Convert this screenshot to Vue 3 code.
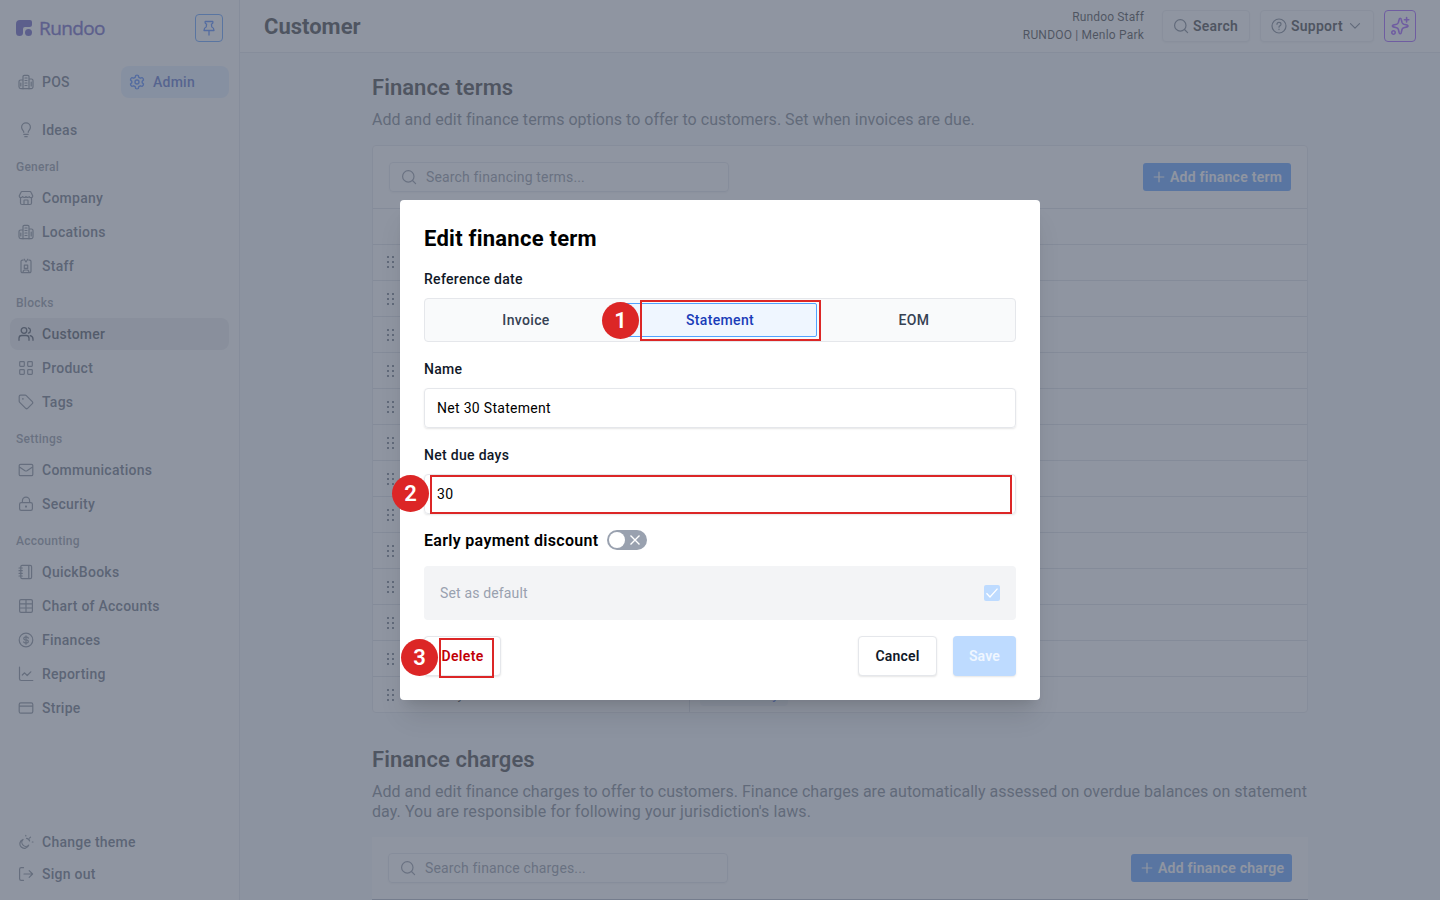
<script setup>
const icons = {
  pos: 'M5 15V2.5A1.2 1.2 0 0 1 6.2 1.3H9.8A1.2 1.2 0 0 1 11 2.5V15M5 6H2.6A1.6 1.6 0 0 0 1 7.6V12.8A1.8 1.8 0 0 0 2.8 14.6H13.2A1.8 1.8 0 0 0 15 12.8V6.6A1.6 1.6 0 0 0 13.4 5H11M7 4H9M7 6.5H9M7 9H9M7 11.5H9M2.8 9V12M13.2 8V12',
  gear: 'M6.7 1.5Q8 .8 9.3 1.5L9.8 3.4L11.3 4.2L13.1 3.7Q14.5 4.3 14.5 6L13.2 7.3V8.7L14.5 10Q14.5 11.7 13.1 12.3L11.3 11.8L9.8 12.6L9.3 14.5Q8 15.2 6.7 14.5L6.2 12.6L4.7 11.8L2.9 12.3Q1.5 11.7 1.5 10L2.8 8.7V7.3L1.5 6Q1.5 4.3 2.9 3.7L4.7 4.2L6.2 3.4ZM10 8A2 2 0 1 1 6 8A2 2 0 1 1 10 8',
  idea: 'M5.8 10.3C5.8 8.6 3.6 8 3.6 5.3A4.4 4.4 0 0 1 12.4 5.3C12.4 8 10.2 8.6 10.2 10.3M5.8 12.3H10.2M6.8 14.7H9.2',
  shop: 'M1.2 6L3 2.2Q3.3 1.5 4 1.5H12Q12.7 1.5 13 2.2L14.8 6Q14.8 7.7 13 7.7Q11.6 7.7 11.3 6.6Q10.4 7.7 9 7.4Q8.4 7.2 8 6.6Q7.4 7.5 6.2 7.5Q5.2 7.4 4.7 6.6Q4.2 7.7 3 7.7Q1.2 7.6 1.2 6M2.5 7.7V13A1.5 1.5 0 0 0 4 14.5H12A1.5 1.5 0 0 0 13.5 13V7.7M6 14.5V10.6Q6 10 6.6 10H9.4Q10 10 10 10.6V14.5',
  staff: 'M5 2.2H4.3A1.3 1.3 0 0 0 3 3.5V13.3A1.3 1.3 0 0 0 4.3 14.6H11.7A1.3 1.3 0 0 0 13 13.3V3.5A1.3 1.3 0 0 0 11.7 2.2H11M6.2 1.2L8 4L9.8 1.2M6.3 7.2H9.7V10.4H6.3ZM5.2 14.5V13.2L6.3 12H9.7L10.8 13.2V14.5',
  users: 'M8.8 4.5A2.8 2.8 0 1 1 3.2 4.5A2.8 2.8 0 1 1 8.8 4.5M1 14.3V12.3A2.8 2.8 0 0 1 3.8 9.5H8.2A2.8 2.8 0 0 1 11 12.3V14.3M10.4 1.8A2.8 2.8 0 0 1 10.4 7.2M12.2 9.7Q15 10.4 15 13V14.3',
  grid: 'M1.7 2.4Q1.7 1.7 2.4 1.7H5.6Q6.3 1.7 6.3 2.4V5.6Q6.3 6.3 5.6 6.3H2.4Q1.7 6.3 1.7 5.6ZM9.7 2.4Q9.7 1.7 10.4 1.7H13.6Q14.3 1.7 14.3 2.4V5.6Q14.3 6.3 13.6 6.3H10.4Q9.7 6.3 9.7 5.6ZM1.7 10.4Q1.7 9.7 2.4 9.7H5.6Q6.3 9.7 6.3 10.4V13.6Q6.3 14.3 5.6 14.3H2.4Q1.7 14.3 1.7 13.6ZM9.7 10.4Q9.7 9.7 10.4 9.7H13.6Q14.3 9.7 14.3 10.4V13.6Q14.3 14.3 13.6 14.3H10.4Q9.7 14.3 9.7 13.6Z',
  tag: 'M1.2 2.5V7.2Q1.2 7.8 1.7 8.3L7.7 14.3Q8.7 15.2 9.6 14.3L14.3 9.6Q15.2 8.7 14.3 7.7L8.3 1.7Q7.8 1.2 7.2 1.2H2.5Q1.2 1.2 1.2 2.5M4.7 4.7H5.1V5.1H4.7Z',
  mail: 'M2.5 2.3H13.5Q14.8 2.3 14.8 3.6V12.4Q14.8 13.7 13.5 13.7H2.5Q1.2 13.7 1.2 12.4V3.6Q1.2 2.3 2.5 2.3M1.4 5L7 8.7Q8 9.3 9 8.7L14.6 5',
  lock: 'M3.2 6.7H12.8Q14.4 6.7 14.4 8.3V12.8Q14.4 14.4 12.8 14.4H3.2Q1.6 14.4 1.6 12.8V8.3Q1.6 6.7 3.2 6.7M4.4 6.7V4.7A3.6 3.6 0 0 1 11.6 4.7V6.7M7.6 10.2H8.4V11H7.6Z',
  book: 'M4 1.4H12.2Q13.6 1.4 13.6 2.8V13.2Q13.6 14.6 12.2 14.6H4Q2.8 14.6 2.8 13.2V2.8Q2.8 1.4 4 1.4M10.8 1.4V14.6M1 4H4.3M1 6.7H4.3M1 9.3H4.3M1 12H4.3',
  table: 'M3 1.6H13Q14.4 1.6 14.4 3V13Q14.4 14.4 13 14.4H3Q1.6 14.4 1.6 13V3Q1.6 1.6 3 1.6M1.6 5.8H14.4M1.6 10H14.4M8 1.6V14.4',
  dollar: 'M14.8 8A6.8 6.8 0 1 1 1.2 8A6.8 6.8 0 1 1 14.8 8M10.3 6.2Q10.3 5.2 9.2 5.2H6.9Q5.8 5.2 5.8 6.5Q5.8 7.5 6.9 7.8L9.2 8.2Q10.3 8.5 10.3 9.5Q10.3 10.8 9.2 10.8H6.9Q5.7 10.8 5.7 9.8M8 3.8V12.2',
  chart: 'M1.5 1.2V12.8Q1.5 14.5 3.2 14.5H14.8M4.3 9L6.6 6.8L9.2 9.5L12.8 5.8',
  card: 'M2.8 2.8H13.2Q14.8 2.8 14.8 4.4V11.6Q14.8 13.2 13.2 13.2H2.8Q1.2 13.2 1.2 11.6V4.4Q1.2 2.8 2.8 2.8M1.2 6.2H14.8',
  theme: 'M5 5.5A4.5 4.5 0 1 0 10.7 11.1A3.7 3.7 0 0 1 5 5.5M7.8 1.3V2M12.5 3.2L11.5 4.2M14.3 8H15M8.5 4.3Q11 4.5 11.6 7',
  out: 'M5.5 1.7H3.2Q1.6 1.7 1.6 3.3V12.7Q1.6 14.3 3.2 14.3H5.5M6 8H14.6M11.2 4.6L14.6 8L11.2 11.4',
  search: 'M13 7.4A5.7 5.7 0 1 1 1.6 7.4A5.7 5.7 0 1 1 13 7.4M11.5 11.5L14.6 14.6',
}
const groups = [
  { title: 'General', items: [['shop', 'Company'], ['pos', 'Locations'], ['staff', 'Staff']] },
  { title: 'Blocks', items: [['users', 'Customer'], ['grid', 'Product'], ['tag', 'Tags']] },
  { title: 'Settings', items: [['mail', 'Communications'], ['lock', 'Security']] },
  { title: 'Accounting', items: [['book', 'QuickBooks'], ['table', 'Chart of Accounts'], ['dollar', 'Finances'], ['chart', 'Reporting'], ['card', 'Stripe']] },
]
const footer = [['theme', 'Change theme'], ['out', 'Sign out']]
</script>

<template>
  <div class="app">
    <aside class="sidebar">
      <div class="brand">
        <svg class="mark" viewBox="0 0 16 16"><path d="M4 0H14Q16 0 16 2V4.5Q16 7 13.5 7H9Q7 7 7 9V13Q7 16 3.5 16Q0 16 0 12.5V4Q0 0 4 0Z" /><circle cx="12.5" cy="12.5" r="3.5" /></svg>
        <span class="wordmark">Rundoo</span>
        <button class="pin">
          <svg class="icon" viewBox="0 0 16 16"><path d="M4.2 1.5H11.8Q12.3 3.8 10.4 4.2L10.8 7Q13 7.8 13 10.5H3Q3 7.8 5.2 7L5.6 4.2Q3.7 3.8 4.2 1.5M8 10.5V15" /></svg>
        </button>
      </div>
      <div class="modes">
        <div class="nav"><svg class="icon" viewBox="0 0 16 16"><path :d="icons.pos" /></svg>POS</div>
        <div class="nav admin"><svg class="icon" viewBox="0 0 16 16"><path :d="icons.gear" /></svg>Admin</div>
      </div>
      <div class="nav"><svg class="icon" viewBox="0 0 16 16"><path :d="icons.idea" /></svg>Ideas</div>
      <template v-for="g in groups" :key="g.title">
        <div class="group">{{ g.title }}</div>
        <div v-for="[icon, label] in g.items" :key="label" class="nav item" :class="{ current: label === 'Customer' }">
          <svg class="icon" viewBox="0 0 16 16"><path :d="icons[icon]" /></svg>{{ label }}
        </div>
      </template>
      <div class="foot">
        <div v-for="[icon, label] in footer" :key="label" class="nav">
          <svg class="icon" viewBox="0 0 16 16"><path :d="icons[icon]" /></svg>{{ label }}
        </div>
      </div>
    </aside>

    <div class="page">
      <header class="top">
        <h1>Customer</h1>
        <div class="who"><span>Rundoo Staff</span><span class="store">RUNDOO | Menlo Park</span></div>
        <button class="tool search"><svg class="icon" viewBox="0 0 16 16"><path :d="icons.search" /></svg>Search</button>
        <button class="tool support">
          <svg class="icon" viewBox="0 0 16 16"><path d="M15 8A7 7 0 1 1 1 8A7 7 0 1 1 15 8M6 6.3Q6 4.4 8 4.4Q10 4.4 10 6.2Q10 7.3 8.8 7.9Q8 8.3 8 9.2M8 11.2V11.6" /></svg>Support
          <svg class="icon chev" viewBox="0 0 16 16"><path d="M3.5 5.7L8 10.2L12.5 5.7" /></svg>
        </button>
        <button class="sparkle">
          <svg viewBox="0 0 20 20"><path d="M10.2 2.3Q11 2.3 11.2 3.2L12 6.4Q12.4 7.8 13.8 8.2L17 9Q19 10 17 10.9L13.8 11.7Q12.4 12.1 12 13.5L11.2 16.8Q10.2 18.8 9.2 16.8L8.4 13.5Q8 12.1 6.6 11.7L3.4 10.9Q1.4 10 3.4 9L6.6 8.2Q8 7.8 8.4 6.4L9.2 3.2Q9.4 2.3 10.2 2.3M16.6 1.5V5.9M14.4 3.7H18.8M5.2 16.5A1.7 1.7 0 1 1 1.8 16.5A1.7 1.7 0 1 1 5.2 16.5" /></svg>
        </button>
      </header>

      <main class="content">
        <h2>Finance terms</h2>
        <p class="terms-note">Add and edit finance terms options to offer to customers. Set when invoices are due.</p>
        <section class="card terms">
          <div class="bar">
            <div class="field"><svg class="icon" viewBox="0 0 16 16"><path :d="icons.search" /></svg>Search financing terms...</div>
            <button class="add"><svg viewBox="0 0 16 16"><path d="M8 2V14M2 8H14" /></svg>Add finance term</button>
          </div>
          <div class="row"></div>
          <div v-for="n in 13" :key="n" class="row">
            <svg class="grip" viewBox="0 0 8 14"><path d="M0 1h2v2h-2zM5 1h2v2h-2zM0 6h2v2h-2zM5 6h2v2h-2zM0 11h2v2h-2zM5 11h2v2h-2z" /></svg>
            <template v-if="n === 13">
              <span class="name">Monthly</span>
              <span class="cell"><span class="badge">Invoice day</span></span>
            </template>
          </div>
        </section>
        <h2 class="second">Finance charges</h2>
        <p class="charges-note">Add and edit finance charges to offer to customers. Finance charges are automatically assessed on overdue balances on statement<br><span class="second-line">day. You are responsible for following your jurisdiction's laws.</span></p>
        <section class="card charges">
          <div class="bar">
            <div class="field"><svg class="icon" viewBox="0 0 16 16"><path :d="icons.search" /></svg>Search finance charges...</div>
            <button class="add"><svg viewBox="0 0 16 16"><path d="M8 2V14M2 8H14" /></svg>Add finance charge</button>
          </div>
        </section>
      </main>
    </div>

    <div class="overlay">
      <div class="modal">
        <h3>Edit finance term</h3>
        <label class="l-ref">Reference date</label>
        <div class="segments"><span>Invoice</span><span class="on">Statement</span><span>EOM</span></div>
        <label>Name</label>
        <div class="input">Net 30 Statement</div>
        <label>Net due days</label>
        <div class="input">30</div>
        <div class="discount">
          <span>Early payment discount</span>
          <div class="toggle"><i></i><svg viewBox="0 0 12 12"><path d="M1.5 1.5L10.5 10.5M10.5 1.5L1.5 10.5" /></svg></div>
        </div>
        <div class="default">
          <span>Set as default</span>
          <svg class="check" viewBox="0 0 16 16"><rect width="16" height="16" rx="2" /><path d="M2.5 8.3L6 12L13.5 3.6" /></svg>
        </div>
        <div class="actions">
          <button class="btn delete">Delete</button>
          <button class="btn cancel">Cancel</button>
          <button class="btn save">Save</button>
        </div>
      </div>
    </div>

    <div class="mark-box b1"></div><div class="mark-dot d1">1</div>
    <div class="mark-box b2"></div><div class="mark-dot d2">2</div>
    <div class="mark-box b3"></div><div class="mark-dot d3">3</div>
  </div>
</template>

<style>
body { margin: 0; overflow: hidden; }
</style>

<style scoped>
* { box-sizing: border-box; }
.app { position: relative; display: flex; width: 1440px; height: 900px; overflow: hidden; font-family: Roboto, "Noto Sans", sans-serif; color: #000; background: #f4f6f9; }
h1, h2, h3, p { margin: 0; }
button { font: inherit; padding: 0; letter-spacing: inherit; }
.icon { width: 16px; height: 16px; flex: none; fill: none; stroke: currentColor; stroke-width: 1.2; stroke-linecap: round; stroke-linejoin: round; }

.sidebar { width: 240px; flex: none; display: flex; flex-direction: column; padding: 14px 10px 10px; background: #fff; border-right: 1px solid #dcdfe5; }
.brand { display: flex; align-items: center; height: 28px; padding: 0 6px; color: #432dd7; }
.mark { width: 16px; height: 16px; fill: #372aac; }
.wordmark { margin-left: 7px; font: 500 19px/28px "Open Sans", sans-serif; letter-spacing: -.6px; color: #372aac; -webkit-text-stroke: .4px; }
.pin { width: 28px; height: 28px; margin-left: auto; display: grid; place-items: center; border: 1px solid #2b7fff; border-radius: 4px; background: #fff; color: #155dfc; }
.pin .icon { stroke-width: 1.3; }
.modes { display: grid; grid-template-columns: 108px 108px; gap: 3px; margin: 24px 0 16px; }
.nav { display: flex; flex: none; align-items: center; height: 32px; gap: 8px; padding: 0 8px; border-radius: 8px; font-size: 14px; font-weight: 500; letter-spacing: .25px; color: #364153; }
.nav .icon { color: #4a5565; opacity: .9; }
.admin { background: #dbeafe; color: #193cb8; }
.admin .icon { color: #155dfc; opacity: 1; stroke-width: 1.4; }
.item { margin-bottom: 2px; }
.current { background: #e5e7eb; color: #101828; }
.current .icon { color: #101828; opacity: 1; stroke-width: 1.3; }
.group { flex: none; height: 32px; margin-top: 2px; padding-left: 6px; font-size: 12px; font-weight: 500; line-height: 34px; letter-spacing: .25px; color: #6a7282; }
.modes + .nav + .group { margin-top: 4px; }
.foot { margin-top: auto; }

.page { flex: 1; min-width: 0; }
.top { display: flex; align-items: center; height: 53px; padding: 0 24px 1px; background: #fff; border-bottom: 1px solid #dcdfe5; }
h1 { padding-top: 2px; font-size: 22px; font-weight: 700; line-height: 30px; letter-spacing: 0; }
.who { margin-left: auto; margin-right: 18px; display: flex; flex-direction: column; align-items: flex-end; font-size: 12px; line-height: 18px; letter-spacing: .15px; }
.store { letter-spacing: .2px; }
.tool { height: 32px; display: flex; align-items: center; gap: 4px; padding: 0 10px; border: 1px solid #e5e7eb; border-radius: 4px; background: #fff; font-size: 14px; font-weight: 600; letter-spacing: .25px; box-shadow: 0 1px 2px #0001; }
.tool .icon { color: #4a5565; }
.search { width: 88px; margin-right: 10px; }
.support { width: 114px; margin-right: 10px; }
.sparkle { width: 32px; height: 32px; display: grid; place-items: center; border: 1px solid #7f22fe; border-radius: 4px; background: #fff; }
.sparkle svg { width: 20px; fill: none; stroke: #7f22fe; stroke-width: 1.6; stroke-linecap: round; }
.content { width: 936px; margin: 0 auto; padding-top: 20px; }
h2 { font-size: 22px; line-height: 30px; font-weight: 600; letter-spacing: .05px; }
p { margin-top: 7px; font-size: 16px; line-height: 20px; letter-spacing: .01px; color: #4a5565; white-space: nowrap; }
.terms-note { letter-spacing: .03px; }
.second-line { letter-spacing: .08px; }
.card { background: #fff; }
.terms { margin-top: 15px; border: 1px solid #dcdfe5; border-radius: 4px; }
.bar { display: flex; align-items: center; justify-content: space-between; height: 62px; padding: 0 16px; }
.field { width: 340px; height: 30px; display: flex; align-items: center; gap: 9px; padding-left: 11px; border: 1px solid #dcdfe5; border-radius: 4px; font-size: 14px; letter-spacing: .16px; color: #6a7282; box-shadow: 0 1px 2px #0001; }
.add { height: 28px; width: 148px; display: flex; align-items: center; gap: 4px; padding-left: 9px; border: 0; border-radius: 3px; background: #2b7fff; color: #fff; font-size: 14px; font-weight: 600; letter-spacing: .25px; white-space: nowrap; }
.add svg { width: 14px; height: 14px; stroke: #fff; stroke-width: 1.4; }
.row { display: flex; align-items: center; height: 36px; border-top: 1px solid #d4d7df; }
.grip { width: 8px; height: 14px; margin-left: 14px; fill: #4a5565; }
.row:nth-child(3) .grip { margin-top: -1px; }
.name { width: 294px; margin-left: 22px; padding-top: 1px; font-size: 13px; line-height: 16px; }
.cell { width: 617px; flex: none; margin-left: -22px; height: 35px; padding: 5px 10px; border-left: 1px solid #d4d7df; }
.badge { display: inline-block; height: 24px; width: 88px; border-radius: 4px; background: #eff2f7; color: #1447e6; font-size: 14px; line-height: 24px; text-align: center; }
.second { margin-top: 32px; }
.charges { margin-top: 15px; height: 63px; border-bottom: 1px solid #99a1af; }
.charges .add { width: 161px; }

.overlay { position: absolute; inset: 0; display: grid; place-items: center; background: rgba(106, 114, 130, .75); }
.modal { width: 640px; height: 500px; padding: 24px; border-radius: 4px; background: #fff; box-shadow: 0 20px 25px -5px rgba(0,0,0,.1), 0 8px 10px -6px rgba(0,0,0,.1); }
h3 { padding-top: 1px; font-size: 22px; line-height: 28px; font-weight: 700; letter-spacing: .25px; }
label { display: block; height: 20px; margin-top: 17px; margin-bottom: 9px; font-size: 14px; line-height: 20px; font-weight: 500; letter-spacing: .3px; color: #101828; }
.l-ref { margin-top: 16px; }
.segments { display: grid; grid-template-columns: repeat(3, 1fr); height: 44px; padding: 4px; border: 1px solid #e5e7eb; border-radius: 4px; background: #f9fafb; font-size: 14px; font-weight: 500; letter-spacing: .35px; color: #364153; }
.segments span { display: grid; place-items: center; }
.segments .on { border: 1px solid #51a2ff; border-radius: 2px; background: #eff6ff; color: #193cb8; }
.input { height: 40px; padding-left: 12px; border: 1px solid #e5e7eb; border-radius: 4px; font-size: 14px; line-height: 38px; letter-spacing: .3px; box-shadow: 0 1px 2px rgba(0,0,0,.1); }
.discount { display: flex; align-items: center; gap: 9px; height: 20px; margin-top: 16px; font-size: 16px; font-weight: 600; letter-spacing: .31px; }
.discount span { width: 174px; white-space: nowrap; }
.toggle { display: flex; align-items: center; width: 40px; height: 20px; padding: 2px; border-radius: 10px; background: #99a1af; }
.toggle i { width: 16px; height: 16px; border-radius: 50%; background: #fff; }
.toggle svg { width: 12px; height: 12px; margin-left: 4px; stroke: #fff; stroke-width: 1.4; }
.default { display: flex; align-items: center; justify-content: space-between; height: 54px; margin-top: 16px; padding: 0 16px; border-radius: 4px; background: #f3f4f6; color: #99a1af; font-size: 14px; letter-spacing: .15px; }
.check { width: 16px; height: 16px; fill: #bedbff; }
.check path { fill: none; stroke: #fff; stroke-width: 1.3; }
.actions { display: flex; margin-top: 16px; }
.btn { height: 40px; border: 1px solid #e5e7eb; border-radius: 4px; background: #fff; font-size: 14px; font-weight: 600; letter-spacing: .2px; box-shadow: 0 1px 2px rgba(0,0,0,.1); }
.delete { width: 77px; margin-right: auto; color: #c10007; letter-spacing: .35px; }
.cancel { width: 79px; margin-right: 16px; color: #101828; }
.save { width: 63px; border: 0; background: #bedbff; color: #eff6ff; }

.mark-box { position: absolute; border: 2px solid #dc2626; }
.b1 { left: 640px; top: 300px; width: 181px; height: 41px; }
.b2 { left: 430px; top: 475px; width: 582px; height: 39px; }
.b3 { left: 439px; top: 638px; width: 55px; height: 40px; }
.mark-dot { position: absolute; width: 37px; height: 37px; border-radius: 50%; background: #dc2626; color: #fff; font-size: 22px; font-weight: 600; line-height: 37px; text-align: center; }
.d1 { left: 602px; top: 302px; }
.d2 { left: 392px; top: 475px; }
.d3 { left: 401px; top: 639px; }
</style>
